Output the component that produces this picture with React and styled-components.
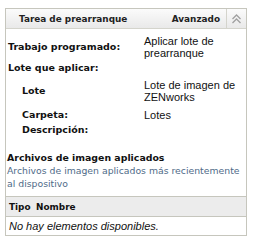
import React from "react";
import styled, { createGlobalStyle } from "styled-components";

const GlobalStyle = createGlobalStyle`
  html, body {
    margin: 0;
    padding: 0;
    background: #ffffff;
  }
`;

const fields = [
  { label: "Trabajo programado:", value: ["Aplicar lote de", "prearranque"], top: 0 },
  { label: "Lote que aplicar:", section: true, top: 3 },
  { label: "Lote", value: ["Lote de imagen de", "ZENworks"], sub: true, top: 5 },
  { label: "Carpeta:", value: ["Lotes"], sub: true, top: 6 },
  { label: "Descripción:", value: [], sub: true, top: 3 },
];

export default function App() {
  return (
    <>
      <GlobalStyle />
      <Panel>
        <Header>
          <Title>Tarea de prearranque</Title>
          <Advanced>Avanzado</Advanced>
          <Collapse>
            <svg width="11" height="10" viewBox="0 0 11 10">
              <path
                d="M1.5 5 L5.5 1 L9.5 5 M1.5 9 L5.5 5 L9.5 9"
                fill="none"
                stroke="#a0a0a0"
                strokeWidth="1.3"
              />
            </svg>
          </Collapse>
        </Header>
        <Body>
          <FieldGrid>
            {fields.map((f) => (
              <React.Fragment key={f.label}>
                <Label $sub={f.sub} $span={f.section} $top={f.top}>
                  {f.label}
                </Label>
                {!f.section && (
                  <Value $top={f.top}>
                    {f.value.map((line) => (
                      <div key={line}>{line}</div>
                    ))}
                  </Value>
                )}
              </React.Fragment>
            ))}
          </FieldGrid>
          <SectionTitle>Archivos de imagen aplicados</SectionTitle>
          <SectionHint>
            Archivos de imagen aplicados más recientemente al dispositivo
          </SectionHint>
        </Body>
        <Table>
          <thead>
            <tr>
              <Th>Tipo</Th>
              <Th $wide>Nombre</Th>
            </tr>
          </thead>
          <tbody>
            <tr>
              <Empty colSpan={2}>No hay elementos disponibles.</Empty>
            </tr>
          </tbody>
        </Table>
      </Panel>
    </>
  );
}

const Panel = styled.div`
  box-sizing: border-box;
  width: 242px;
  margin: 8px 0 0 5px;
  border: 1px solid #c6c6bd;
  background: #ffffff;
`;

const Header = styled.div`
  display: flex;
  align-items: center;
  height: 19px;
  border-bottom: 1px solid #d4d4cc;
  background: linear-gradient(#fbfbfb, #e9e9e9);
  font-family: "DejaVu Sans", sans-serif;
  font-weight: bold;
  font-size: 8.9px;
  color: #222;
`;

const Title = styled.div`
  flex: 1;
  padding-left: 13px;
`;

const Advanced = styled.div`
  padding-right: 6px;
`;

const Collapse = styled.div`
  width: 19px;
  height: 100%;
  display: flex;
  align-items: center;
  justify-content: center;
  border-left: 1px solid #d4d4cc;
`;

const Body = styled.div`
  padding: 6px 0 6px 0;
`;

const FieldGrid = styled.div`
  display: grid;
  grid-template-columns: 138px 1fr;
  align-items: center;
`;

const Label = styled.div`
  grid-column: ${(p) => (p.$span ? "1 / span 2" : "auto")};
  margin-top: ${(p) => p.$top}px;
  padding-left: ${(p) => (p.$sub ? "16px" : "2px")};
  font-family: "DejaVu Sans", sans-serif;
  font-weight: bold;
  font-size: 9.5px;
  line-height: 12px;
  color: #111;
`;

const Value = styled.div`
  margin-top: ${(p) => p.$top}px;
  font-family: "Liberation Sans", Arial, sans-serif;
  font-size: 11px;
  line-height: 12px;
  color: #111;
`;

const SectionTitle = styled.div`
  margin-top: 16px;
  padding-left: 1px;
  font-family: "DejaVu Sans", sans-serif;
  font-weight: bold;
  font-size: 9.4px;
  line-height: 12px;
  color: #111;
`;

const SectionHint = styled.div`
  margin-top: 1px;
  padding-left: 1px;
  font-family: "DejaVu Sans", sans-serif;
  font-size: 9.3px;
  line-height: 12.5px;
  color: #4f6b88;
`;

const Table = styled.table`
  width: 100%;
  border-collapse: collapse;
`;

const Th = styled.th`
  width: ${(p) => (p.$wide ? "auto" : "24px")};
  text-align: left;
  padding: 2px 0 2px 3px;
  height: 15px;
  background: #ececec;
  border-top: 1px solid #c6c6bd;
  border-bottom: 1px solid #c6c6bd;
  font-family: "DejaVu Sans", sans-serif;
  font-weight: bold;
  font-size: 8.9px;
  color: #111;
`;

const Empty = styled.td`
  padding: 3px 0 3px 3px;
  font-family: "Liberation Sans", Arial, sans-serif;
  font-style: italic;
  font-size: 11px;
  line-height: 12px;
  color: #111;
`;
